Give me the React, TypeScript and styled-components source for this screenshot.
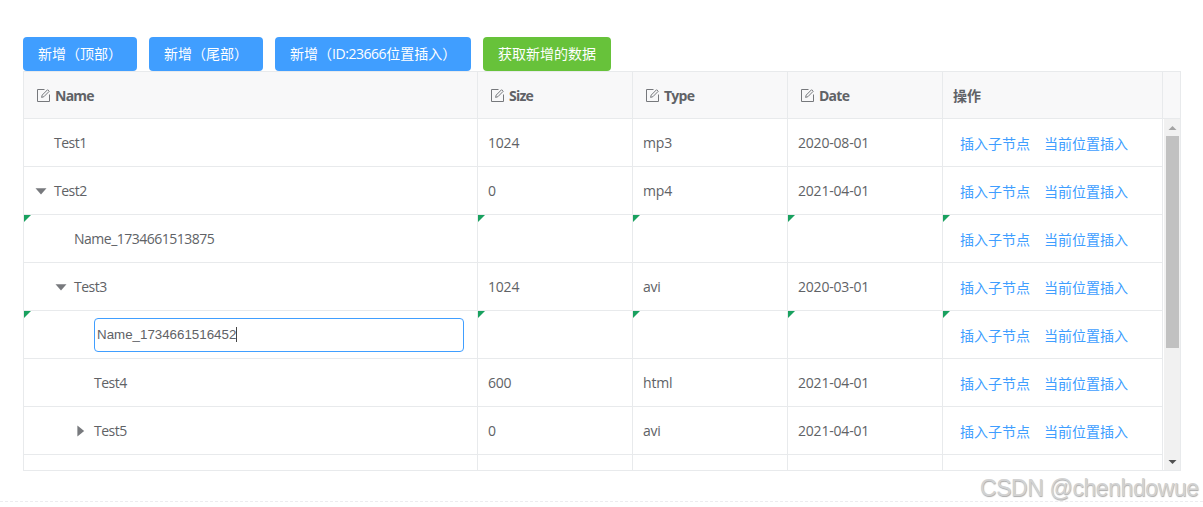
import React, { useState } from "react";
import styled, { createGlobalStyle, css } from "styled-components";

const LINE = "#e8eaec";
const UI = `"Open Sans", "Noto Sans CJK SC", sans-serif`;

const GlobalStyle = createGlobalStyle`
  * { box-sizing: border-box; }
  body { margin: 0; background: #fff; color: #606266; font: 14px/1.5 ${UI}; overflow: hidden; }
`;

const Page = styled.main`
  position: relative;
  height: 507px;
  padding: 37px 22px 0 23px;
`;

const Toolbar = styled.div`
  display: flex;
  gap: 12px;
`;

const Button = styled.button<{ $success?: boolean; $width: number }>`
  width: ${(p) => p.$width}px;
  height: 34px;
  padding: 0 0 1px 15px;
  border: 0;
  border-radius: 4px;
  background: ${(p) => (p.$success ? "#67c23a" : "#409eff")};
  color: #fff;
  font: 14px/33px ${UI};
  text-align: left;
  white-space: nowrap;
`;

const Latin = styled.span`
  letter-spacing: -0.45px;
`;

const Table = styled.section`
  display: flex;
  flex-direction: column;
  width: 1158px;
  height: 400px;
  border: 1px solid ${LINE};
`;

const columns = css`
  display: grid;
  grid-template-columns: 454px 155px 155px 155px 220px;
`;

const Header = styled.div`
  ${columns}
  flex: none;
  height: 47px;
  background: #f8f8f9;
  border-bottom: 1px solid ${LINE};
  font-weight: 700;
`;

const HeadCell = styled.div<{ $icon?: boolean }>`
  display: flex;
  align-items: center;
  gap: 5px;
  padding-left: ${(p) => (p.$icon ? 13 : 10)}px;
  border-right: 1px solid ${LINE};
  letter-spacing: ${(p) => (p.$icon ? -0.75 : 0)}px;
`;

const Body = styled.div`
  display: flex;
  flex: 1;
  min-height: 0;
`;

const Rows = styled.div`
  width: 1139px;
  overflow: hidden;
`;

const Row = styled.div`
  ${columns}
  height: 48px;
`;

const Cell = styled.div<{ $fresh?: boolean; $level?: number }>`
  position: relative;
  display: flex;
  align-items: center;
  padding: 0 13px 0 ${(p) => (p.$level === undefined ? 10 : 10 + p.$level * 20)}px;
  border-right: 1px solid ${LINE};
  border-bottom: 1px solid ${LINE};
  letter-spacing: ${(p) => (p.$level === undefined ? -0.2 : -0.5)}px;
  ${(p) =>
    p.$fresh &&
    css`
      &::before {
        content: "";
        position: absolute;
        top: 0;
        left: 0;
        width: 7px;
        height: 7px;
        background: #19a15f;
        clip-path: polygon(0 0, 100% 0, 0 100%);
      }
    `}
`;

const Toggle = styled.span`
  display: flex;
  flex: none;
  width: 20px;
  height: 16px;
  align-items: center;
  margin-top: 1px;
`;

const NameInput = styled.input`
  flex: 1;
  min-width: 0;
  height: 34px;
  padding: 0 2px 1px;
  border: 1px solid #409eff;
  border-radius: 4px;
  outline: none;
  background: #fff;
  color: #606266;
  font: 13.333px "Liberation Sans", Arial, sans-serif;
`;

const InputWrap = styled.div`
  position: relative;
  display: flex;
  flex: 1;
  margin-top: 1px;
`;

const Caret = styled.i`
  position: absolute;
  left: 142px;
  top: 9px;
  width: 1px;
  height: 15px;
  background: #444;
`;

const Links = styled.div`
  display: flex;
  gap: 14px;
  padding: 2px 0 0 7px;
  color: #409eff;
  letter-spacing: 0;
  white-space: nowrap;
`;

const Scrollbar = styled.div`
  display: flex;
  flex-direction: column;
  align-items: center;
  width: 16px;
  margin-left: 1px;
  background: #f1f1f1;
`;

const Thumb = styled.div`
  width: 13px;
  height: 212px;
  margin-left: 1px;
  background: #c1c1c1;
`;

const Arrow = styled.svg`
  display: block;
  flex: none;
  width: 16px;
  height: 17px;
`;

const Spacer = styled.div`
  flex: 1;
`;

const Divider = styled.div`
  position: absolute;
  left: 0;
  right: 0;
  top: 501px;
  height: 1px;
  background: repeating-linear-gradient(90deg, #ececef 0 3px, transparent 3px 5px);
`;

const Watermark = styled.div`
  position: absolute;
  left: 980px;
  top: 474px;
  color: #d2d2d2;
  font: 23px/28px "Liberation Sans", Arial, sans-serif;
  letter-spacing: -0.42px;
  text-shadow: 0.5px 0.5px 1px #aaa;
  white-space: nowrap;
`;

const EditIcon = () => (
  <svg width="13" height="13" viewBox="0 0 13 13" fill="none" stroke="#76787c">
    <path d="M7.5 .5H.5v12h12V5.5" />
    <path d="M4.6 8.4l.6-2.3L10.6.7l1.6 1.6-5.3 5.4z" />
  </svg>
);

const TreeIcon = ({ open }: { open: boolean }) => (
  <svg width="14" height="14" viewBox="0 0 14 14" fill="#77797d">
    <path d={open ? "M1.5 4.2h11L7 10.5z" : "M3.4 1.5v11l6.8-5.5z"} />
  </svg>
);

type Item = {
  name: string;
  level: number;
  size?: string;
  type?: string;
  date?: string;
  open?: boolean;
  fresh?: boolean;
  editing?: boolean;
};

const items: Item[] = [
  { name: "Test1", level: 0, size: "1024", type: "mp3", date: "2020-08-01" },
  { name: "Test2", level: 0, size: "0", type: "mp4", date: "2021-04-01", open: true },
  { name: "Name_1734661513875", level: 1, fresh: true },
  { name: "Test3", level: 1, size: "1024", type: "avi", date: "2020-03-01", open: true },
  { name: "Name_1734661516452", level: 2, fresh: true, editing: true },
  { name: "Test4", level: 2, size: "600", type: "html", date: "2021-04-01" },
  { name: "Test5", level: 2, size: "0", type: "avi", date: "2021-04-01", open: false },
];

function NameEditor({ initial }: { initial: string }) {
  const [value, setValue] = useState(initial);
  return (
    <InputWrap>
      <NameInput value={value} onChange={(e) => setValue(e.target.value)} />
      <Caret />
    </InputWrap>
  );
}

export default function App() {
  return (
    <Page>
      <GlobalStyle />
      <Toolbar>
        <Button $width={114}>新增（顶部）</Button>
        <Button $width={114}>新增（尾部）</Button>
        <Button $width={196}>
          新增（<Latin>ID:23666</Latin>位置插入）
        </Button>
        <Button $width={128} $success>
          获取新增的数据
        </Button>
      </Toolbar>
      <Table>
        <Header>
          {["Name", "Size", "Type", "Date"].map((title) => (
            <HeadCell key={title} $icon>
              <EditIcon />
              {title}
            </HeadCell>
          ))}
          <HeadCell>操作</HeadCell>
        </Header>
        <Body>
          <Rows>
            {items.map((item) => (
              <Row key={item.name}>
                <Cell $level={item.level} $fresh={item.fresh}>
                  <Toggle>{item.open !== undefined && <TreeIcon open={item.open} />}</Toggle>
                  {item.editing ? <NameEditor initial={item.name} /> : item.name}
                </Cell>
                <Cell $fresh={item.fresh}>{item.size}</Cell>
                <Cell $fresh={item.fresh}>{item.type}</Cell>
                <Cell $fresh={item.fresh}>{item.date}</Cell>
                <Cell $fresh={item.fresh}>
                  <Links>
                    <span>插入子节点</span>
                    <span>当前位置插入</span>
                  </Links>
                </Cell>
              </Row>
            ))}
            <Row>
              <Cell />
              <Cell />
              <Cell />
              <Cell />
              <Cell />
            </Row>
          </Rows>
          <Scrollbar>
            <Arrow viewBox="0 0 16 17" fill="#a3a3a3">
              <path d="M4.5 11l4-4 4 4z" />
            </Arrow>
            <Thumb />
            <Spacer />
            <Arrow viewBox="0 0 16 17" fill="#505050">
              <path d="M4.5 7l4 4 4-4z" />
            </Arrow>
          </Scrollbar>
        </Body>
      </Table>
      <Divider />
      <Watermark>CSDN @chenhdowue</Watermark>
    </Page>
  );
}
